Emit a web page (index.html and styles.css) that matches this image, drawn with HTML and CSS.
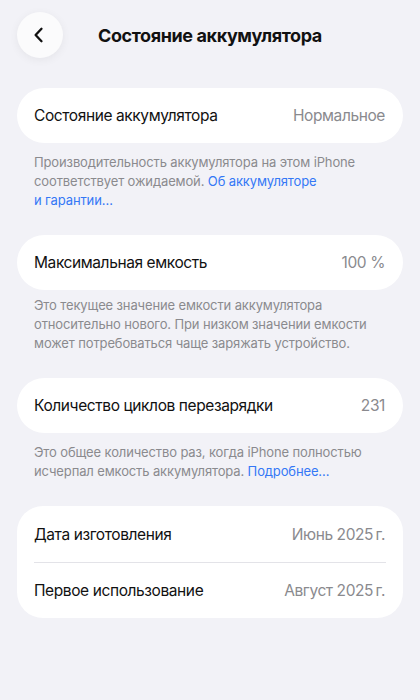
FILE: index.html
```html
<!DOCTYPE html>
<html lang="ru">
<head>
    <meta charset="UTF-8">
    <meta name="viewport" content="width=device-width, initial-scale=1.0">
    <title>Состояние аккумулятора</title>
    <link rel="stylesheet" href="styles.css">
</head>
<body>
    <div class="page">
        <header class="nav">
            <button class="back-btn" aria-label="Назад">
                <svg width="12" height="16" viewBox="0 0 12 16">
                    <path d="M8.5 1.8 L2.6 8 L8.5 14.2" fill="none" stroke="#111" stroke-width="2.3" stroke-linecap="round" stroke-linejoin="round"/>
                </svg>
            </button>
            <h1 class="nav-title">Состояние аккумулятора</h1>
        </header>

        <section class="group">
            <div class="card">
                <div class="row">
                    <span class="label">Состояние аккумулятора</span>
                    <span class="value">Нормальное</span>
                </div>
            </div>
            <p class="footer">Производительность аккумулятора на этом iPhone соответствует ожидаемой. <a href="#">Об аккумуляторе и&nbsp;гарантии…</a></p>
        </section>

        <section class="group">
            <div class="card">
                <div class="row">
                    <span class="label">Максимальная емкость</span>
                    <span class="value">100 %</span>
                </div>
            </div>
            <p class="footer footer-tight">Это текущее значение емкости аккумулятора относительно нового. При низком значении емкости может потребоваться чаще заряжать устройство.</p>
        </section>

        <section class="group">
            <div class="card">
                <div class="row">
                    <span class="label">Количество циклов перезарядки</span>
                    <span class="value">231</span>
                </div>
            </div>
            <p class="footer">Это общее количество раз, когда iPhone полностью исчерпал емкость аккумулятора. <a href="#">Подробнее…</a></p>
        </section>

        <section class="group">
            <div class="card card-list">
                <div class="row row-tall">
                    <span class="label">Дата изготовления</span>
                    <span class="value">Июнь 2025&#8201;г.</span>
                </div>
                <div class="row row-tall">
                    <span class="label">Первое использование</span>
                    <span class="value">Август 2025&#8201;г.</span>
                </div>
            </div>
        </section>
    </div>
</body>
</html>
```

FILE: styles.css
```css
body {
    font-family: Inter, "Noto Sans", sans-serif;
    background-color: #f2f2f7;
    margin: 0;
    padding: 0;
    color: #111;
}

.page {
    padding: 12px 17px 0 17px;
}

.nav {
    display: flex;
    align-items: center;
    gap: 35px;
    height: 46px;
    margin-bottom: 30px;
}

.back-btn {
    width: 46px;
    height: 46px;
    border-radius: 50%;
    border: none;
    background-color: #fbfbfc;
    box-shadow: 0 2px 10px rgba(0, 0, 0, 0.06);
    display: flex;
    align-items: center;
    justify-content: center;
    padding: 0 2px 0 0;
    cursor: pointer;
}

.nav-title {
    font-size: 18px;
    font-weight: 700;
    margin: 0;
    letter-spacing: -0.4px;
}

.group {
    margin-bottom: 25px;
}

.card {
    background-color: #fff;
    border-radius: 28px;
}

.card-list {
    border-radius: 26px;
}

.row {
    display: flex;
    align-items: center;
    justify-content: space-between;
    height: 55px;
    padding: 0 18px 0 17px;
    font-size: 15.5px;
    letter-spacing: -0.4px;
}

.row-tall {
    height: 56px;
    position: relative;
}

.card-list .row + .row::before {
    content: "";
    position: absolute;
    top: 0;
    left: 17px;
    right: 17px;
    height: 1px;
    background-color: #e3e3e8;
}

.label {
    color: #111;
}

.value {
    color: #8a8a8e;
}

.footer {
    margin: 0;
    padding: 10px 17px 0 17px;
    font-size: 13px;
    line-height: 19px;
    letter-spacing: -0.13px;
    color: #8a8a8e;
}

.footer-tight {
    padding-top: 6px;
}

.footer a {
    color: #3478f6;
    text-decoration: none;
}
```
